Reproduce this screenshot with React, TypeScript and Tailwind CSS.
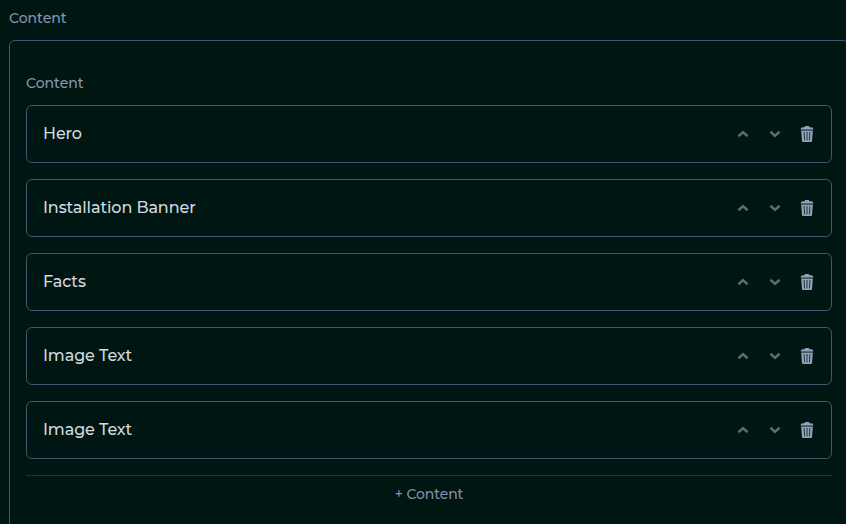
import { useState } from "react";

type Block = {
    id: number
    label: string
}

const initialBlocks: Block[] = [
    { id: 1, label: 'Hero' },
    { id: 2, label: 'Installation Banner' },
    { id: 3, label: 'Facts' },
    { id: 4, label: 'Image Text' },
    { id: 5, label: 'Image Text' },
]

const Chevron = ({ d }: { d: string }) => (
    <svg width={12} height={8} viewBox="0 0 12 8" fill="none" stroke="currentColor" strokeWidth={2.5}>
        <path d={d} />
    </svg>
)

const Trash = () => (
    <svg width={14} height={16} viewBox="0 0 14 16" fill="currentColor" className="shrink-0">
        <path d="M4.6 1.2V1a1 1 0 0 1 1-1h2.8a1 1 0 0 1 1 1v.2h1.9a2 2 0 0 1 2 1.8v.6H.7V3a2 2 0 0 1 2-1.8z" />
        <path d="M1 3.6h12V5H1z" opacity={0.45} />
        <path d="M1.2 5h11.6l-.8 10a1 1 0 0 1-1 1H3a1 1 0 0 1-1-1z" />
        <path d="M4.1 6l.5 8.4M7 6v8.4M9.9 6l-.5 8.4" stroke="#001613" strokeOpacity={0.75} fill="none" />
    </svg>
)

const BlockRow = ({ block, onMove, onRemove }: {
    block: Block
    onMove: (offset: number) => void
    onRemove: () => void
}) => {
    return (
        <div className="flex h-[58px] items-center justify-between rounded-md border border-slate-600 px-4">
            <span className="text-base leading-6 font-medium tracking-[-0.1px] text-[#d3d9df]">{block.label}</span>
            <div className="flex items-center gap-4">
                <button aria-label="Move up" onClick={() => onMove(-1)} className="flex size-4 items-center justify-center text-[#5c6876]">
                    <Chevron d="M1.4 6.2L6 2.2L10.6 6.2" />
                </button>
                <button aria-label="Move down" onClick={() => onMove(1)} className="flex size-4 items-center justify-center text-[#5c6876]">
                    <Chevron d="M1.4 1.8L6 5.8L10.6 1.8" />
                </button>
                <button aria-label="Remove" onClick={onRemove} className="flex size-4 items-center justify-center text-slate-400">
                    <Trash />
                </button>
            </div>
        </div>
    )
}

const App = () => {
    const [blocks, setBlocks] = useState(initialBlocks)

    const moveBlock = (index: number, offset: number) => {
        const target = index + offset
        if (target < 0 || target >= blocks.length) {
            return
        }
        const updated = [...blocks]
        updated[index] = blocks[target]
        updated[target] = blocks[index]
        setBlocks(updated)
    }

    const removeBlock = (id: number) => {
        setBlocks(blocks.filter((block) => block.id !== id))
    }

    const addBlock = () => {
        setBlocks([...blocks, { id: Date.now(), label: 'Content' }])
    }

    return (
        <div className="h-screen overflow-hidden bg-[#001613] pl-[9px] pt-2 font-['Montserrat','Inter',sans-serif]">
            <div className="text-sm leading-5 font-medium text-[#8797b0]">Content</div>
            <div className="mt-3 h-[600px] w-[840px] rounded-md border border-slate-600 px-4 pt-8">
                <div className="text-sm leading-5 font-medium text-[#8797b0]">Content</div>
                <div className="mt-3 flex flex-col gap-4">
                    {blocks.map((block, index) => (
                        <BlockRow
                            key={block.id}
                            block={block}
                            onMove={(offset) => moveBlock(index, offset)}
                            onRemove={() => removeBlock(block.id)}
                        />
                    ))}
                </div>
                <button onClick={addBlock} className="mt-4 flex w-full justify-center border-t border-[#073f39] pt-2 text-sm leading-5 font-medium tracking-[-0.1px] text-[#8192a8]">
                    + Content
                </button>
            </div>
        </div>
    )
}

export default App;
